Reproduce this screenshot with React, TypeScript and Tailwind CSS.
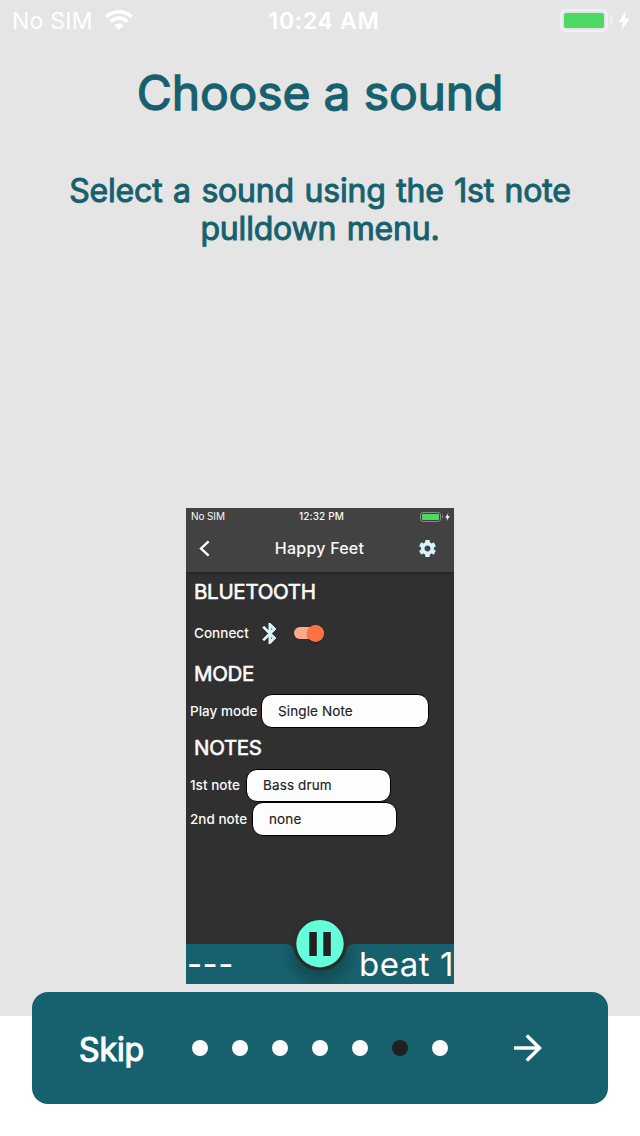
import type { ReactNode } from "react";

function Bolt({ className }: { className: string }) {
  return (
    <svg viewBox="0 0 12 19" className={className} fill="currentColor">
      <path d="M8 0 0.5 11H5.2L3.3 19 11.8 7.500H6.800Z" />
    </svg>
  );
}

function SelectRow({ label, value, box }: { label: string; value: string; box: string }) {
  return (
    <div className="flex items-center pl-1">
      <span className="shrink-0 whitespace-nowrap text-[13.5px] font-medium tracking-[0.02px]">{label}</span>
      <div className={`ml-auto flex shrink-0 items-center justify-between rounded-[11px] border border-black bg-[#fdfdfd] pl-4 text-[13.5px] text-[#212121] ${box}`}>
        <span className="tracking-[0.12px] [-webkit-text-stroke:0.15px_#212121]">{value}</span>
        <svg viewBox="0 0 10 5" className="mr-[17px] h-1 w-2" fill="#fff">
          <path d="M0 0h10L5 5z" />
        </svg>
      </div>
    </div>
  );
}

function Heading({ children }: { children: ReactNode }) {
  return <h2 className="whitespace-nowrap pl-2 text-[20.5px] leading-6 tracking-[-0.3px] [-webkit-text-stroke:0.6px_#fafafa]">{children}</h2>;
}

function Phone() {
  return (
    <div className="flex h-[476px] w-[268px] flex-col overflow-hidden bg-[#303030] text-[#fafafa]">
      <div className="z-10 h-16 shrink-0 bg-[#424242] shadow-[0_1px_4px_rgba(0,0,0,0.45)]">
        <div className="grid h-[17px] grid-cols-3 items-center pr-1 pl-[5px] text-[10px] leading-none">
          <span className="-mt-px tracking-[-0.1px]">No SIM</span>
          <span className="-mt-px pl-[2px] text-center font-medium tracking-[0.1px]">12:32 PM</span>
          <div className="flex items-center justify-end">
            <div className="h-[10px] w-[21px] rounded-[3px] border border-[#888] p-px">
              <div className="h-full rounded-[1px] bg-[#4cd964]" />
            </div>
            <div className="mr-[2px] ml-px h-[3px] w-px bg-[#888]" />
            <Bolt className="h-2 w-[5px]" />
          </div>
        </div>
        <div className="flex h-[47px] items-center justify-between pr-[18px] pl-[13px]">
          <svg viewBox="0 0 12 18" className="h-[17px] w-[11px]" fill="none" stroke="#fff" strokeWidth="2.600">
            <path d="M10.500 1.200 2.200 9l8.300 7.800" />
          </svg>
          <span className="-mt-[2px] pl-[10px] text-[16px] font-medium tracking-[0.23px]">Happy Feet</span>
          <svg viewBox="2 2 20 20" className="h-[17px] w-[17px]" fill="#d8f3fa">
            <path d="M19.43 12.98c.04-.32.07-.64.07-.98s-.03-.66-.07-.98l2.11-1.65c.19-.15.24-.42.12-.64l-2-3.46c-.12-.22-.39-.3-.61-.22l-2.49 1c-.52-.4-1.08-.73-1.69-.98l-.38-2.65C14.46 2.18 14.25 2 14 2h-4c-.25 0-.46.18-.49.42l-.38 2.65c-.61.25-1.17.59-1.69.98l-2.49-1c-.23-.09-.49 0-.61.22l-2 3.46c-.13.22-.07.49.12.64l2.11 1.65c-.04.32-.07.65-.07.98s.03.66.07.98l-2.11 1.65c-.19.15-.24.42-.12.64l2 3.46c.12.22.39.3.61.22l2.49-1c.52.4 1.08.73 1.69.98l.38 2.65c.03.24.24.42.49.42h4c.25 0 .46-.18.49-.42l.38-2.65c.61-.25 1.17-.59 1.69-.98l2.49 1c.23.09.49 0 .61-.22l2-3.46c.12-.22.07-.49-.12-.64l-2.11-1.65zM12 15.5c-1.93 0-3.5-1.57-3.5-3.5s1.57-3.5 3.5-3.5 3.5 1.57 3.5 3.5-1.57 3.500-3.500 3.500z" />
          </svg>
        </div>
      </div>

      <div className="flex h-[372px] shrink-0 flex-col pt-2">
        <Heading>BLUETOOTH</Heading>
        <div className="mt-4 flex h-[26px] items-center pl-2">
          <span className="w-[68px] text-[13.5px] font-medium tracking-[0.02px]">Connect</span>
          <svg viewBox="5 2 14 20" className="h-[21px] w-4" fill="#d8f3fa" stroke="#d8f3fa" strokeWidth="0.800">
            <path d="M17.71 7.71 12 2h-1v7.590L6.410 5 5 6.410 10.590 12 5 17.590 6.410 19 11 14.410V22h1l5.710-5.710L13.410 12l4.300-4.290zM13 5.830l1.880 1.880L13 9.590V5.830zm1.880 10.460L13 18.170v-3.760l1.880 1.880z" />
          </svg>
          <div className="ml-4 flex h-3 w-[30px] items-center justify-end rounded-full bg-[#ffa98d]">
            <div className="h-[17px] w-[17px] shrink-0 rounded-full bg-[#ff7043] shadow-[0_1px_2px_rgba(0,0,0,0.35)]" />
          </div>
        </div>
        <div className="mt-4"><Heading>MODE</Heading></div>
        <div className="mt-2 w-[243px]"><SelectRow label="Play mode" value="Single Note" box="h-[34px] w-[168px]" /></div>
        <div className="mt-2"><Heading>NOTES</Heading></div>
        <div className="mt-[9px] w-[205px]"><SelectRow label="1st note" value="Bass drum" box="h-[33px] w-[145px]" /></div>
        <div className="w-[211px]"><SelectRow label="2nd note" value="none" box="h-[34px] w-[145px]" /></div>
      </div>

      <div className="relative flex h-10 shrink-0 items-center justify-between text-[33px] leading-10 text-white">
        <svg viewBox="0 0 268 64" className="absolute bottom-0 left-0 h-16 w-[268px]">
          <defs>
            <clipPath id="bar-area"><path d="M0 24H98C104 24 107 26 108 31A27 27 0 0 0 160 31C161 26 164 24 170 24H268V64H0Z" /></clipPath>
            <radialGradient id="button-shade">
              <stop offset="0.500" stopColor="#000" stopOpacity="0.220" />
              <stop offset="1" stopColor="#000" stopOpacity="0" />
            </radialGradient>
          </defs>
          <circle cx="134" cy="26" r="32" fill="url(#button-shade)" />
          <path d="M0 24H98C104 24 107 26 108 31A27 27 0 0 0 160 31C161 26 164 24 170 24H268V64H0Z" fill="#17616e" />
          <circle cx="134" cy="34" r="39" fill="url(#button-shade)" clipPath="url(#bar-area)" />
          <circle cx="134" cy="23.700" r="23.700" fill="#64ffda" />
          <path d="M123.300 12h7.500v24h-7.500zM137.300 12h7.500v24h-7.500z" fill="#212121" />
        </svg>
        <span className="relative pl-px tracking-[0.4px]">---</span>
        <span className="relative whitespace-nowrap tracking-[0.55px]">beat 1</span>
      </div>
    </div>
  );
}

export default function App() {
  return (
    <main className="flex h-[1136px] w-[640px] flex-col overflow-hidden bg-white font-['Inter',sans-serif]">
      <section className="flex h-[1016px] shrink-0 flex-col items-center bg-[#e5e5e5]">
        <header className="grid h-10 w-full shrink-0 grid-cols-[1fr_auto_1fr] items-center pr-[10px] pl-3 text-[23px] leading-[38px] text-white">
          <div className="flex items-center">
            <span className="pt-[2px] tracking-[0.25px]">No SIM</span>
            <svg viewBox="0 0 28 20" className="ml-3 h-5 w-7" fill="none" stroke="currentColor" strokeWidth="3.600">
              <path d="M1.300 6.900a18.300 18.300 0 0 1 25.400 0M5.600 11.600a12 12 0 0 1 16.800 0" />
              <path d="M9.300 15.300a7.400 7.400 0 0 1 9.400 0L14 20Z" fill="currentColor" stroke="none" />
            </svg>
          </div>
          <span className="pt-[2px] pl-[6px] font-semibold tracking-[0.7px]">10:24 AM</span>
          <div className="flex items-center justify-end">
            <div className="h-[23px] w-12 rounded-[6px] border-2 border-[#f1f1f3] p-[2px]">
              <div className="h-full rounded-[2px] bg-[#4cd964]" />
            </div>
            <div className="mr-[5px] ml-[2px] h-2 w-[3px] rounded-r-full bg-[#f1f1f3]" />
            <Bolt className="h-[19px] w-3" />
          </div>
        </header>
        <h1 className="mt-[23px] h-[60px] whitespace-nowrap text-[48px] leading-[60px] tracking-[-0.15px] text-[#17616e] [-webkit-text-stroke:1.3px_#17616e]">Choose a sound</h1>
        <div className="mt-[49px] h-[76px] whitespace-nowrap text-center text-[32px] leading-[38px] tracking-[-0.2px] text-[#17616e] [word-spacing:1.8px] [-webkit-text-stroke:1px_#17616e]">
          <p>Select a sound using the 1st note</p>
          <p>pulldown menu.</p>
        </div>
        <div className="mt-[260px]"><Phone /></div>
      </section>
      <nav className="z-10 mx-8 -mt-6 flex h-28 shrink-0 items-center rounded-2xl bg-[#17616e]">
        <button className="w-40 pt-1 pl-[47px] text-left text-[32px] tracking-[-0.1px] text-[#fdfdfd] [-webkit-text-stroke:1.2px_#fdfdfd]">Skip</button>
        <div className="flex gap-6">
          {[0, 1, 2, 3, 4, 5, 6].map((n) => (
            <span key={n} className={`h-4 w-4 rounded-full ${n === 5 ? "bg-[#212121]" : "bg-[#fdfdfd]"}`} />
          ))}
        </div>
        <svg viewBox="0 0 28 28" className="ml-[66px] h-7 w-7" fill="none" stroke="#fdfdfd" strokeWidth="3.500">
          <path d="M0 14h25.500M12.800 1.500 25.500 14 12.800 26.500" />
        </svg>
      </nav>
    </main>
  );
}
